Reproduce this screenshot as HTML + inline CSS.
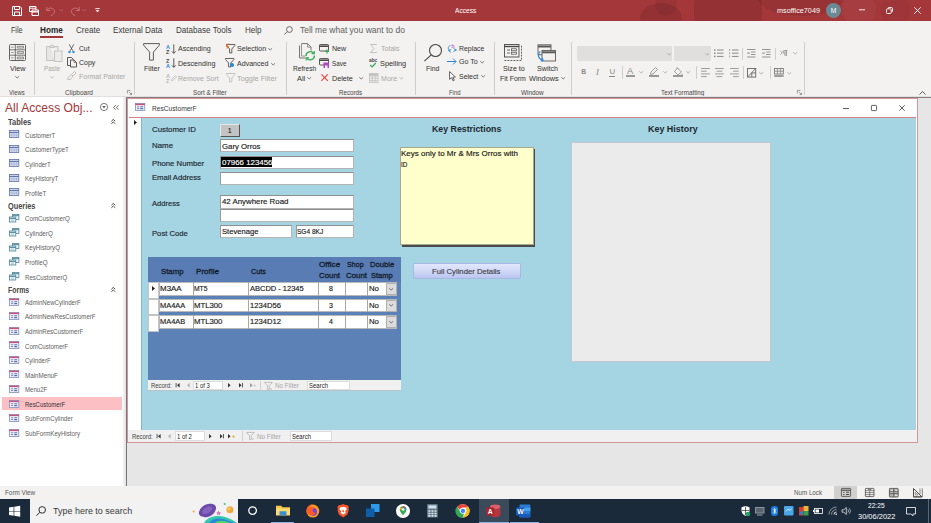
<!DOCTYPE html>
<html lang="en">
<head>
<meta charset="utf-8">
<title>Access - ResCustomerF</title>
<style>
*{box-sizing:border-box;margin:0;padding:0}
html,body{width:931px;height:523px;overflow:hidden;background:#e6e6e6}
body{font-family:"Liberation Sans",sans-serif;font-size:8px;color:#262626;position:relative}
.abs{position:absolute}
.t{position:absolute;white-space:nowrap;line-height:1;transform-origin:0 50%}
svg{position:absolute;overflow:visible}
</style>
</head>
<body>
<div class="abs" style="left:0.00px;top:0.00px;width:931.00px;height:21.00px;background:#a4373a;"></div>
<div class="abs" style="left:0.00px;top:21.00px;width:931.00px;height:76.00px;background:#f3f2f1;"></div>
<div class="abs" style="left:0;top:0;width:931px;height:21px;overflow:hidden">
<div class="abs" style="left:640.00px;top:3.00px;width:42.00px;height:30.00px;background:rgba(0,0,0,.10);border-radius:50%"></div>
<div class="abs" style="left:655.00px;top:-6.00px;width:22.00px;height:22.00px;background:rgba(0,0,0,.05);border-radius:50%"></div>
<div class="abs" style="left:694.00px;top:-10.00px;width:68.00px;height:40.00px;background:rgba(0,0,0,.10);border-radius:14px"></div>
<div class="abs" style="left:758.00px;top:-22.00px;width:86.00px;height:38.00px;background:rgba(0,0,0,.08);border-radius:50%"></div>
<div class="abs" style="left:842.00px;top:-8.00px;width:34.00px;height:34.00px;background:rgba(255,255,255,.03);border-radius:50%"></div>
<div class="abs" style="left:880.00px;top:-5.00px;width:30.00px;height:30.00px;background:rgba(0,0,0,.03);border-radius:50%"></div>
</div>
<svg style="left:12.00px;top:6.00px" width="10" height="10" viewBox="0 0 10 10" fill="none" stroke="#fff" stroke-width="1"><path d="M.5.5h7.500l1.500 1.500v7.500h-9z"/><path d="M2.500.5v3h5v-3M2.500 9.500v-3.500h5v3.500"/></svg>
<svg style="left:29.00px;top:6.00px" width="10" height="10" viewBox="0 0 10 10" fill="none" stroke="#fff" stroke-width="1"><path d="M.5.5h6.500v5h-6.500z"/><path d="M.5 2.200h6.500"/><path d="M3 4h6.500v5.500h-6.500z" fill="#a4373a"/><path d="M3 5.800h6.500" stroke-width="1.400"/></svg>
<svg style="left:46.00px;top:6.00px" width="10" height="10" viewBox="0 0 10 10" fill="none" stroke="#c97578" stroke-width="1"><path d="M.8 1v3.500h3.500"/><path d="M1 4.300c1.500-2.500 5-3 6.800-.8s.2 5-2.800 6"/></svg>
<svg style="left:59.30px;top:9.40px" width="4.4" height="2.2" viewBox="0 0 4.4 2.2" ><path d="M.3.3l1.900 1.700 1.900-1.700" fill="none" stroke="#bf6b6e" stroke-width=".8"/></svg>
<svg style="left:70.00px;top:6.00px" width="10" height="10" viewBox="0 0 10 10" fill="none" stroke="#c97578" stroke-width="1"><path d="M9.200 1v3.500h-3.500"/><path d="M9 4.300c-1.500-2.500-5-3-6.800-.8s-.2 5 2.800 6"/></svg>
<svg style="left:82.30px;top:9.40px" width="4.4" height="2.2" viewBox="0 0 4.4 2.2" ><path d="M.3.3l1.900 1.700 1.900-1.700" fill="none" stroke="#bf6b6e" stroke-width=".8"/></svg>
<svg style="left:95.00px;top:8.00px" width="5" height="5" viewBox="0 0 5 5" ><path d="M.3.600h4.400" fill="none" stroke="#fff" stroke-width=".9"/><path d="M.5 2.200l2 2 2-2z" fill="#fff"/></svg>
<div class="t" style="left:454.50px;top:6.86px;font-size:7.60px;color:#fff;transform:scaleX(0.870);">Access</div>
<div class="t" style="left:777.00px;top:6.96px;font-size:7.60px;color:#fff;transform:scaleX(0.954);">msoffice7049</div>
<div class="abs" style="left:826.00px;top:3.00px;width:15.00px;height:15.00px;background:#6b8a96;border-radius:50%"></div>
<div class="t" style="left:830.80px;top:7.64px;font-size:6.72px;color:#fff;">M</div>
<svg style="left:859.00px;top:9.00px" width="6" height="2" viewBox="0 0 6 2" ><path d="M0 .8h6" stroke="#fff" stroke-width=".9"/></svg>
<svg style="left:886.00px;top:7.00px" width="7" height="7" viewBox="0 0 7 7" fill="none" stroke="#fff" stroke-width=".9"><rect x=".5" y="1.800" width="4.700" height="4.700" rx="1"/><path d="M2 1.500c0-.6.4-1 1-1h2.500c.6 0 1 .4 1 1v2.500c0 .6-.4 1-1 1"/></svg>
<svg style="left:914.00px;top:7.00px" width="7" height="7" viewBox="0 0 7 7" ><path d="M.3.300l6.400 6.400M6.700.300l-6.400 6.400" stroke="#fff" stroke-width=".9"/></svg>
<div class="t" style="left:10.50px;top:26.46px;font-size:8.50px;color:#3b3a39;transform:scaleX(0.840);">File</div>
<div class="t" style="left:39.80px;top:26.46px;font-size:8.50px;color:#252423;transform:scaleX(0.965);font-weight:bold;">Home</div>
<div class="abs" style="left:39.80px;top:36.30px;width:23.20px;height:1.70px;background:#a4373a;"></div>
<div class="t" style="left:75.80px;top:26.46px;font-size:8.50px;color:#3b3a39;transform:scaleX(0.945);">Create</div>
<div class="t" style="left:112.90px;top:26.46px;font-size:8.50px;color:#3b3a39;transform:scaleX(0.957);">External Data</div>
<div class="t" style="left:176.00px;top:26.46px;font-size:8.50px;color:#3b3a39;transform:scaleX(0.949);">Database Tools</div>
<div class="t" style="left:244.80px;top:26.46px;font-size:8.50px;color:#3b3a39;transform:scaleX(0.944);">Help</div>
<svg style="left:284.00px;top:25.50px" width="9" height="9" viewBox="0 0 9 9" fill="none" stroke="#605e5c" stroke-width=".9"><circle cx="5.400" cy="3.500" r="2.900"/><path d="M3.300 5.600l-3 3"/></svg>
<div class="t" style="left:300.00px;top:26.46px;font-size:8.50px;color:#605e5c;">Tell me what you want to do</div>
<div class="abs" style="left:34.00px;top:42.00px;width:1.00px;height:52.50px;background:#d0cecc;"></div>
<div class="abs" style="left:134.00px;top:42.00px;width:1.00px;height:52.50px;background:#d0cecc;"></div>
<div class="abs" style="left:286.20px;top:42.00px;width:1.00px;height:52.50px;background:#d0cecc;"></div>
<div class="abs" style="left:415.00px;top:42.00px;width:1.00px;height:52.50px;background:#d0cecc;"></div>
<div class="abs" style="left:494.00px;top:42.00px;width:1.00px;height:52.50px;background:#d0cecc;"></div>
<div class="abs" style="left:571.40px;top:42.00px;width:1.00px;height:52.50px;background:#d0cecc;"></div>
<div class="abs" style="left:804.20px;top:42.00px;width:1.00px;height:52.50px;background:#d0cecc;"></div>
<div class="t" style="left:8.90px;top:89.61px;font-size:6.80px;color:#484644;transform:scaleX(0.871);">Views</div>
<div class="t" style="left:65.00px;top:89.61px;font-size:6.80px;color:#484644;transform:scaleX(0.962);">Clipboard</div>
<div class="t" style="left:193.00px;top:89.71px;font-size:6.80px;color:#484644;transform:scaleX(0.936);">Sort &amp; Filter</div>
<div class="t" style="left:338.80px;top:89.71px;font-size:6.80px;color:#484644;transform:scaleX(0.916);">Records</div>
<div class="t" style="left:448.50px;top:89.71px;font-size:6.80px;color:#484644;transform:scaleX(0.869);">Find</div>
<div class="t" style="left:521.20px;top:89.71px;font-size:6.80px;color:#484644;transform:scaleX(0.939);">Window</div>
<div class="t" style="left:661.10px;top:89.71px;font-size:6.80px;color:#484644;transform:scaleX(0.924);">Text Formatting</div>
<svg style="left:126.70px;top:89.50px" width="5" height="5" viewBox="0 0 5 5" fill="none" stroke="#7a7876" stroke-width=".7"><path d="M.4 3.500v-3.100h3.100" /><path d="M1.800 1.800l2.800 2.800M4.600 2.600v2h-2"/></svg>
<svg style="left:797.20px;top:89.50px" width="5" height="5" viewBox="0 0 5 5" fill="none" stroke="#7a7876" stroke-width=".7"><path d="M.4 3.500v-3.100h3.100" /><path d="M1.800 1.800l2.800 2.800M4.600 2.600v2h-2"/></svg>
<svg style="left:919.20px;top:91.40px" width="7" height="4" viewBox="0 0 7 4" ><path d="M.5 3.500l3-3 3 3" fill="none" stroke="#484644" stroke-width=".9"/></svg>
<svg style="left:9.00px;top:43.70px" width="17" height="17" viewBox="0 0 17 17" fill="none" stroke="#555351" stroke-width=".9"><rect x=".5" y=".5" width="16" height="16" rx="1"/><path d="M.5 5.800h16M.5 11.200h16M6.300.5v16" stroke-width=".8"/><path d="M8.300 2.300h6.200v1.800h-6.200zM8.300 7.600h6.200v1.800h-6.200zM8.300 13h6.200v1.800h-6.200z" stroke-width=".6" fill="#e3e2e1"/><path d="M2 3.200h2.600M2 8.500h2.600M2 13.900h2.600" stroke-width=".6"/></svg>
<div class="t" style="left:9.80px;top:64.80px;font-size:7.50px;color:#323130;transform:scaleX(0.962);">View</div>
<svg style="left:15.00px;top:75.90px" width="4.4" height="2.2" viewBox="0 0 4.4 2.2" ><path d="M.3.3l1.900 1.700 1.900-1.700" fill="none" stroke="#5c5a58" stroke-width=".8"/></svg>
<svg style="left:45.50px;top:43.70px" width="16.5" height="18" viewBox="0 0 16.5 18" fill="#e6e5e4" stroke="#c2c0be" stroke-width=".9"><path d="M4.500 2.500h-4v14h8"/><path d="M8.500 2.500h3.500v4"/><path d="M4 3.500l1-2.300h2.500l1 2.300z"/><rect x="8.500" y="7" width="7.500" height="10.500" fill="#ecebea"/></svg>
<div class="t" style="left:44.30px;top:64.80px;font-size:7.50px;color:#a9a7a5;transform:scaleX(0.845);">Paste</div>
<svg style="left:50.20px;top:75.90px" width="4.4" height="2.2" viewBox="0 0 4.4 2.2" ><path d="M.3.3l1.900 1.700 1.900-1.700" fill="none" stroke="#b3b1af" stroke-width=".8"/></svg>
<svg style="left:68.40px;top:43.50px" width="7" height="9.5" viewBox="0 0 7 9.5" ><path d="M1.200.3l3.600 6.500M5.800.3l-3.600 6.500" fill="none" stroke="#4a4846" stroke-width=".8"/><circle cx="1.500" cy="8" r="1.300" fill="#3a96dd"/><circle cx="5.500" cy="8" r="1.300" fill="#3a96dd"/></svg>
<div class="t" style="left:78.50px;top:44.70px;font-size:7.50px;color:#323130;transform:scaleX(0.900);">Cut</div>
<svg style="left:66.70px;top:56.50px" width="10" height="10.5" viewBox="0 0 10 10.5" fill="none" stroke="#4a4846" stroke-width=".9"><path d="M.5.5h4l2 2v6h-6z"/><path d="M3.500 3h3.500l2.500 2.500v4.500h-6z" fill="#f3f2f1"/><path d="M7 3v2.500h2.500" stroke-width=".6"/></svg>
<div class="t" style="left:78.50px;top:58.70px;font-size:7.50px;color:#323130;transform:scaleX(0.931);">Copy</div>
<svg style="left:67.40px;top:71.00px" width="9.5" height="9" viewBox="0 0 9.5 9" fill="none" stroke="#b9b7b5" stroke-width=".8"><path d="M7.500.5l1.500 1.500-3 3-1.500-1.500z"/><path d="M4.500 3.500l1.500 1.500-2.500 3.500h-3l.5-2z"/></svg>
<div class="t" style="left:78.50px;top:72.70px;font-size:7.50px;color:#a9a7a5;transform:scaleX(0.935);">Format Painter</div>
<svg style="left:143.00px;top:43.00px" width="17" height="17.5" viewBox="0 0 17 17.5" ><path d="M.6.600h15.800v1.500l-6 7v8h-3.800v-8l-6-7z" fill="none" stroke="#555351" stroke-width=".95"/></svg>
<div class="t" style="left:143.70px;top:65.30px;font-size:7.50px;color:#323130;transform:scaleX(0.948);">Filter</div>
<svg style="left:166.00px;top:43.50px" width="11" height="10" viewBox="0 0 11 10" ><text x="0" y="4.600" font-size="5.500" font-weight="bold" fill="#2b88d8" font-family="Liberation Sans, sans-serif">A</text><text x="0" y="9.800" font-size="5.500" font-weight="bold" fill="#4a4846" font-family="Liberation Sans, sans-serif">Z</text><path d="M7.800.3v9M5.800 7.300l2 2 2-2" fill="none" stroke="#4a4846" stroke-width=".9"/></svg>
<div class="t" style="left:178.10px;top:45.40px;font-size:7.50px;color:#323130;transform:scaleX(0.934);">Ascending</div>
<svg style="left:166.00px;top:58.00px" width="11" height="10" viewBox="0 0 11 10" ><text x="0" y="4.600" font-size="5.500" font-weight="bold" fill="#4a4846" font-family="Liberation Sans, sans-serif">Z</text><text x="0" y="9.800" font-size="5.500" font-weight="bold" fill="#2b88d8" font-family="Liberation Sans, sans-serif">A</text><path d="M7.800.3v9M5.800 7.300l2 2 2-2" fill="none" stroke="#4a4846" stroke-width=".9"/></svg>
<div class="t" style="left:178.10px;top:60.00px;font-size:7.50px;color:#323130;transform:scaleX(0.942);">Descending</div>
<svg style="left:166.00px;top:72.50px" width="11" height="10" viewBox="0 0 11 10" ><text x="0" y="4.600" font-size="5.500" font-weight="bold" fill="#b9b7b5" font-family="Liberation Sans, sans-serif">A</text><text x="0" y="9.800" font-size="5.500" font-weight="bold" fill="#b9b7b5" font-family="Liberation Sans, sans-serif">Z</text><path d="M6 6l3.500-3.500 1.200 1.200-3.500 3.500-1.700.5z" fill="none" stroke="#b9b7b5" stroke-width=".7"/></svg>
<div class="t" style="left:178.10px;top:74.60px;font-size:7.50px;color:#a9a7a5;transform:scaleX(0.930);">Remove Sort</div>
<svg style="left:225.60px;top:43.70px" width="9.4" height="9.4" viewBox="0 0 10 10" ><path d="M.5.5h9v1l-3.300 3.800v4.200h-2.400v-4.200l-3.300-3.800z" fill="none" stroke="#4a4846" stroke-width=".9"/><path d="M1.800-.5l-2 3.500h1.600l-1 3 2.800-4h-1.600l1.400-2.500z" fill="#f7630c"/></svg>
<div class="t" style="left:237.40px;top:45.40px;font-size:7.50px;color:#323130;transform:scaleX(0.946);">Selection</div>
<svg style="left:268.30px;top:47.90px" width="4.4" height="2.2" viewBox="0 0 4.4 2.2" ><path d="M.3.3l1.900 1.700 1.900-1.700" fill="none" stroke="#5c5a58" stroke-width=".8"/></svg>
<svg style="left:225.40px;top:58.20px" width="9.4" height="9.4" viewBox="0 0 10 10" ><path d="M.5.5h9v1l-3.300 3.800v4.200h-2.400v-4.200l-3.300-3.800z" fill="none" stroke="#4a4846" stroke-width=".9"/><circle cx="7.500" cy="7.500" r="2.200" fill="#2b88d8"/></svg>
<div class="t" style="left:237.40px;top:60.00px;font-size:7.50px;color:#323130;transform:scaleX(0.941);">Advanced</div>
<svg style="left:270.80px;top:62.50px" width="4.4" height="2.2" viewBox="0 0 4.4 2.2" ><path d="M.3.3l1.900 1.700 1.900-1.700" fill="none" stroke="#5c5a58" stroke-width=".8"/></svg>
<svg style="left:225.80px;top:73.00px" width="9.4" height="9.4" viewBox="0 0 10 10" ><path d="M.5.5h9v1l-3.300 3.800v4.200h-2.400v-4.200l-3.300-3.800z" fill="none" stroke="#bdbbb9" stroke-width=".9"/></svg>
<div class="t" style="left:237.40px;top:74.60px;font-size:7.50px;color:#a9a7a5;transform:scaleX(0.977);">Toggle Filter</div>
<svg style="left:297.60px;top:43.20px" width="17.5" height="19" viewBox="0 0 17.5 19" fill="none" stroke="#6a6866" stroke-width=".9"><path d="M1.500 2.500v12.500h6"/><path d="M3.500.6h6l3.500 3.500v3.500"/><path d="M3.500.6v12.500h4" stroke="#8a8886"/><path d="M9.500.6v3.500h3.500" stroke-width=".7"/><path d="M8 13a4.300 4.300 0 0 1 7.800-2.500M16.500 12.500a4.300 4.300 0 0 1-7.800 2.500" stroke="#33a852" stroke-width="1.300"/><path d="M16.300 8v2.800h-2.800M8.200 17.500v-2.800h2.800" stroke="#33a852" stroke-width="1.100"/></svg>
<div class="t" style="left:292.80px;top:64.70px;font-size:7.50px;color:#323130;transform:scaleX(0.883);">Refresh</div>
<div class="t" style="left:297.10px;top:74.60px;font-size:7.50px;color:#323130;transform:scaleX(0.984);">All</div>
<svg style="left:307.40px;top:77.10px" width="4.4" height="2.2" viewBox="0 0 4.4 2.2" ><path d="M.3.3l1.900 1.700 1.900-1.700" fill="none" stroke="#5c5a58" stroke-width=".8"/></svg>
<svg style="left:319.40px;top:43.80px" width="10.5" height="9.5" viewBox="0 0 10.5 9.5" fill="none" stroke="#4a4846" stroke-width=".9"><rect x=".5" y=".5" width="9" height="6.500" rx=".8"/><path d="M.5 2.200h9" stroke-width="1.600"/><path d="M8 5.500v4M6 7.500h4" stroke="#33a852" stroke-width="1.200"/></svg>
<div class="t" style="left:331.50px;top:45.40px;font-size:7.50px;color:#323130;transform:scaleX(0.946);">New</div>
<svg style="left:319.40px;top:58.20px" width="10.5" height="10" viewBox="0 0 10.5 10" fill="none" stroke="#4a4846" stroke-width=".9"><rect x=".5" y=".5" width="9" height="6.500" rx=".8"/><path d="M.5 2.200h9" stroke-width="1.600"/><rect x="4.500" y="4.500" width="5.500" height="5.500" fill="#b146c2" stroke="none"/><rect x="6" y="7.500" width="2.500" height="2.500" fill="#f3f2f1" stroke="none"/></svg>
<div class="t" style="left:331.50px;top:60.00px;font-size:7.50px;color:#323130;transform:scaleX(0.848);">Save</div>
<svg style="left:321.00px;top:74.30px" width="7.2" height="7.2" viewBox="0 0 7.2 7.2" ><path d="M.4.400l6.400 6.400M6.800.400l-6.400 6.400" stroke="#e8403a" stroke-width="1.100"/></svg>
<div class="t" style="left:331.50px;top:74.60px;font-size:7.50px;color:#323130;transform:scaleX(0.955);">Delete</div>
<svg style="left:358.60px;top:77.10px" width="4.4" height="2.2" viewBox="0 0 4.4 2.2" ><path d="M.3.3l1.900 1.700 1.900-1.700" fill="none" stroke="#5c5a58" stroke-width=".8"/></svg>
<svg style="left:369.80px;top:44.20px" width="7.5" height="9" viewBox="0 0 7.5 9" ><path d="M7 .5h-6.500l3.500 4-3.500 4h6.500" fill="none" stroke="#bdbbb9" stroke-width=".9"/></svg>
<div class="t" style="left:380.60px;top:45.40px;font-size:7.50px;color:#a9a7a5;transform:scaleX(0.939);">Totals</div>
<svg style="left:369.40px;top:57.50px" width="8" height="10" viewBox="0 0 8 10" ><text x="0" y="4" font-size="4.800" font-weight="bold" fill="#4a4846" font-family="Liberation Sans, sans-serif">abc</text><path d="M1.200 7l2 2 3.600-4" fill="none" stroke="#33a852" stroke-width="1.200"/></svg>
<div class="t" style="left:380.00px;top:60.00px;font-size:7.50px;color:#323130;transform:scaleX(0.982);">Spelling</div>
<svg style="left:368.60px;top:72.80px" width="9.5" height="10" viewBox="0 0 9.5 10" fill="none" stroke="#c2c0be" stroke-width=".8"><rect x=".5" y=".5" width="8.500" height="9"/><path d="M.5 3h8.500M.5 5.300h8.500M.5 7.600h8.500M3.300 3v6.500M6.200 3v6.500"/><path d="M.5 1.700h8.500" stroke-width="2"/></svg>
<div class="t" style="left:380.60px;top:74.60px;font-size:7.50px;color:#a9a7a5;transform:scaleX(0.942);">More</div>
<svg style="left:399.00px;top:77.10px" width="4.4" height="2.2" viewBox="0 0 4.4 2.2" ><path d="M.3.3l1.900 1.700 1.900-1.700" fill="none" stroke="#b3b1af" stroke-width=".8"/></svg>
<svg style="left:423.90px;top:43.70px" width="18.2" height="17.5" viewBox="0 0 18.2 17.5" fill="none" stroke="#4a4846" stroke-width="1.100"><circle cx="11.500" cy="6.500" r="6"/><path d="M7.200 10.800l-6.800 6.400"/></svg>
<div class="t" style="left:426.20px;top:64.70px;font-size:7.50px;color:#323130;transform:scaleX(0.918);">Find</div>
<svg style="left:447.00px;top:43.00px" width="10" height="10" viewBox="0 0 10 10" ><text x="4.500" y="4.500" font-size="5.500" fill="#b146c2" font-family="Liberation Sans, sans-serif">b</text><path d="M3.500 2.500c-3 1-3 4 0 5.500M6.500 8.500l3-1.500-3-1.500" fill="none" stroke="#2b88d8" stroke-width=".9"/><path d="M3.800 9.500l-2.500-2 3-1" fill="none" stroke="#2b88d8" stroke-width=".8"/></svg>
<div class="t" style="left:459.30px;top:44.50px;font-size:7.50px;color:#323130;transform:scaleX(0.919);">Replace</div>
<svg style="left:447.10px;top:58.00px" width="10" height="7" viewBox="0 0 10 7" ><path d="M0 3.500h9M6 .5l3 3-3 3" fill="none" stroke="#2b88d8" stroke-width="1"/></svg>
<div class="t" style="left:459.30px;top:58.20px;font-size:7.50px;color:#323130;transform:scaleX(0.945);">Go To</div>
<svg style="left:480.20px;top:60.70px" width="4.4" height="2.2" viewBox="0 0 4.4 2.2" ><path d="M.3.3l1.900 1.700 1.900-1.700" fill="none" stroke="#5c5a58" stroke-width=".8"/></svg>
<svg style="left:448.50px;top:71.00px" width="7" height="10" viewBox="0 0 7 10" ><path d="M.6.600v7.800l2-1.800 1.500 3.200 1.200-.6-1.500-3 2.600-.2z" fill="#fff" stroke="#3b3a39" stroke-width=".8"/></svg>
<div class="t" style="left:459.30px;top:72.50px;font-size:7.50px;color:#323130;transform:scaleX(0.926);">Select</div>
<svg style="left:480.70px;top:75.00px" width="4.4" height="2.2" viewBox="0 0 4.4 2.2" ><path d="M.3.3l1.900 1.700 1.900-1.700" fill="none" stroke="#5c5a58" stroke-width=".8"/></svg>
<svg style="left:504.30px;top:43.50px" width="18.2" height="17.3" viewBox="0 0 18.2 17.3" fill="none" stroke="#4a4846" stroke-width=".9"><rect x=".5" y=".5" width="14.500" height="12.500"/><path d="M.5 2.500h14.500" stroke-width="1.400"/><path d="M.5 16.500h17v-16" stroke-dasharray="1.800 1.200"/><path d="M3 6h3M3 9h3" stroke-width=".8"/><rect x="7.500" y="4.800" width="5" height="2" stroke-width=".7"/><rect x="7.500" y="8.200" width="5" height="2" stroke-width=".7"/></svg>
<div class="t" style="left:502.60px;top:64.70px;font-size:7.50px;color:#323130;transform:scaleX(0.951);">Size to</div>
<div class="t" style="left:500.40px;top:74.60px;font-size:7.50px;color:#323130;transform:scaleX(0.928);">Fit Form</div>
<svg style="left:537.30px;top:43.50px" width="19" height="17.5" viewBox="0 0 19 17.5" fill="none" stroke="#5c5a58" stroke-width=".9"><rect x="1" y=".8" width="13" height="10" fill="#f3f2f1"/><path d="M1 2.500h13" stroke-width="2"/><rect x="5" y="6.500" width="13.500" height="10.500" fill="#f3f2f1"/><path d="M5 8.300h13.500" stroke-width="2"/><path d="M3.200 7.500c-3 2.500-2.500 7 2.500 9" stroke="#2b88d8" stroke-width="1.100"/><path d="M3.500 17l2.800-.5-1-2.800" stroke="#2b88d8" stroke-width="1"/></svg>
<div class="t" style="left:536.60px;top:64.70px;font-size:7.50px;color:#323130;transform:scaleX(0.951);">Switch</div>
<div class="t" style="left:529.30px;top:74.60px;font-size:7.50px;color:#323130;transform:scaleX(0.976);">Windows</div>
<svg style="left:560.60px;top:77.10px" width="4.4" height="2.2" viewBox="0 0 4.4 2.2" ><path d="M.3.3l1.900 1.700 1.900-1.700" fill="none" stroke="#5c5a58" stroke-width=".8"/></svg>
<div class="abs" style="left:576.50px;top:46.20px;width:95.70px;height:14.50px;background:#e1dfdd;border-radius:1px"></div>
<div class="abs" style="left:673.60px;top:46.20px;width:37.80px;height:14.50px;background:#e1dfdd;border-radius:1px"></div>
<svg style="left:666.60px;top:52.90px" width="4.4" height="2.2" viewBox="0 0 4.4 2.2" ><path d="M.3.3l1.900 1.700 1.900-1.700" fill="none" stroke="#a19f9d" stroke-width=".8"/></svg>
<svg style="left:705.30px;top:52.90px" width="4.4" height="2.2" viewBox="0 0 4.4 2.2" ><path d="M.3.3l1.900 1.700 1.900-1.700" fill="none" stroke="#a19f9d" stroke-width=".8"/></svg>
<svg style="left:714.10px;top:48.70px" width="9.5" height="8.5" viewBox="0 0 9.5 8.5" fill="none" stroke="#8a8886"><path d="M3 1h6.500M3 4.200h6.500M3 7.400h6.500" stroke-width="1"/><rect x="0" y=".3" width="1.500" height="1.500" fill="#8a8886" stroke="none"/><rect x="0" y="3.500" width="1.500" height="1.500" fill="#8a8886" stroke="none"/><rect x="0" y="6.700" width="1.500" height="1.500" fill="#8a8886" stroke="none"/></svg>
<svg style="left:728.70px;top:48.70px" width="9.5" height="8.5" viewBox="0 0 9.5 8.5" fill="none" stroke="#8a8886"><path d="M3 1h6.500M3 4.200h6.500M3 7.400h6.500" stroke-width="1"/><path d="M.6 0v2M.6 3.200v2M.6 6.400v2" stroke-width=".7"/></svg>
<div class="abs" style="left:742.40px;top:47.50px;width:1.00px;height:12.00px;background:#d0cecc;"></div>
<svg style="left:747.30px;top:48.70px" width="8.5" height="8.5" viewBox="0 0 8.5 8.5" fill="none" stroke="#8a8886"><path d="M0 .5h8.500M4 3h4.500M4 5.500h4.500M0 8h8.500" stroke-width=".9"/><path d="M0 4.200h2.500M1.500 3.200l1 1-1 1" stroke-width=".7"/></svg>
<svg style="left:761.90px;top:48.70px" width="8.5" height="8.5" viewBox="0 0 8.5 8.5" fill="none" stroke="#8a8886"><path d="M0 .5h8.500M4 3h4.500M4 5.500h4.500M0 8h8.500" stroke-width=".9"/><path d="M.5 4.200h2.500M1.500 3.200l-1 1 1 1" stroke-width=".7"/></svg>
<div class="abs" style="left:775.10px;top:47.50px;width:1.00px;height:12.00px;background:#d0cecc;"></div>
<svg style="left:780.40px;top:50.00px" width="8" height="6" viewBox="0 0 8 6" fill="none" stroke="#8a8886"><path d="M.3.800l1.800 2-1.800 2" stroke-width=".7"/><path d="M5 .5v5.500M6.500.5v5.500M7.500.5h-3a1.500 1.500 0 0 0 0 3h.5" stroke-width=".8"/></svg>
<svg style="left:792.60px;top:52.40px" width="4.4" height="2.2" viewBox="0 0 4.4 2.2" ><path d="M.3.3l1.900 1.700 1.900-1.700" fill="none" stroke="#a19f9d" stroke-width=".8"/></svg>
<div class="t" style="left:581.20px;top:68.98px;font-size:6.65px;color:#8a8886;font-weight:bold;">B</div>
<div class="t" style="left:596.30px;top:68.56px;font-size:7.60px;color:#8a8886;transform:scaleX(1.150);font-style:italic;font-family:'Liberation Serif',serif;">I</div>
<div class="t" style="left:609.40px;top:68.19px;font-size:7.75px;color:#8a8886;">U</div>
<div class="abs" style="left:609.20px;top:76.00px;width:6.00px;height:0.80px;background:#8a8886;"></div>
<div class="abs" style="left:621.50px;top:66.40px;width:1.00px;height:12.80px;background:#d0cecc;"></div>
<div class="t" style="left:627.30px;top:67.24px;font-size:9.00px;color:#8a8886;transform:scaleX(1.033);">A</div>
<div class="abs" style="left:625.60px;top:75.30px;width:9.60px;height:1.60px;background:#9b9997;"></div>
<svg style="left:638.80px;top:71.40px" width="4.4" height="2.2" viewBox="0 0 4.4 2.2" ><path d="M.3.3l1.900 1.700 1.900-1.700" fill="none" stroke="#a19f9d" stroke-width=".8"/></svg>
<svg style="left:650.00px;top:67.00px" width="8.5" height="8" viewBox="0 0 8.5 8" ><path d="M5.500.5l2 2-4.500 4.500-2.500.5.500-2.500z" fill="none" stroke="#8a8886" stroke-width=".8"/></svg>
<div class="abs" style="left:649.40px;top:75.30px;width:9.60px;height:1.60px;background:#9b9997;"></div>
<svg style="left:662.60px;top:71.40px" width="4.4" height="2.2" viewBox="0 0 4.4 2.2" ><path d="M.3.3l1.900 1.700 1.900-1.700" fill="none" stroke="#a19f9d" stroke-width=".8"/></svg>
<svg style="left:674.00px;top:66.50px" width="8.5" height="8.5" viewBox="0 0 8.5 8.5" ><path d="M3.500 1l4 4-3.500 3-3.500-3.500z M2.500.2l2 2" fill="none" stroke="#8a8886" stroke-width=".8"/><path d="M8 6.500l.7 1.500h-1.400z" fill="#8a8886"/></svg>
<div class="abs" style="left:673.10px;top:75.30px;width:9.60px;height:1.60px;background:#9b9997;"></div>
<svg style="left:686.40px;top:71.40px" width="4.4" height="2.2" viewBox="0 0 4.4 2.2" ><path d="M.3.3l1.900 1.700 1.900-1.700" fill="none" stroke="#a19f9d" stroke-width=".8"/></svg>
<div class="abs" style="left:696.00px;top:66.40px;width:1.00px;height:12.80px;background:#d0cecc;"></div>
<svg style="left:700.60px;top:68.40px" width="8.8" height="10.8" viewBox="0 0 8.8 10.8" fill="none" stroke="#8a8886" stroke-width="0.8"><path d="M0.00 0.50h8.80"/><path d="M0.00 3.20h5.72"/><path d="M0.00 5.90h8.80"/><path d="M0.00 8.60h5.72"/></svg>
<svg style="left:715.10px;top:68.40px" width="8.8" height="10.8" viewBox="0 0 8.8 10.8" fill="none" stroke="#8a8886" stroke-width="0.8"><path d="M0.00 0.50h8.80"/><path d="M1.54 3.20h5.72"/><path d="M0.00 5.90h8.80"/><path d="M1.54 8.60h5.72"/></svg>
<svg style="left:729.60px;top:68.40px" width="8.8" height="10.8" viewBox="0 0 8.8 10.8" fill="none" stroke="#8a8886" stroke-width="0.8"><path d="M0.00 0.50h8.80"/><path d="M3.08 3.20h5.72"/><path d="M0.00 5.90h8.80"/><path d="M3.08 8.60h5.72"/></svg>
<div class="abs" style="left:743.00px;top:66.40px;width:1.00px;height:12.80px;background:#d0cecc;"></div>
<svg style="left:747.30px;top:67.60px" width="9.2" height="9.6" viewBox="0 0 9.2 9.6" fill="none" stroke="#6a6866" stroke-width=".9"><rect x=".5" y=".5" width="8.200" height="8.600"/><path d="M.5 9.100l8.200-8.600M4.800 9.100v-4.200h3.900" /></svg>
<svg style="left:759.30px;top:71.70px" width="4.4" height="2.2" viewBox="0 0 4.4 2.2" ><path d="M.3.3l1.900 1.700 1.900-1.700" fill="none" stroke="#a19f9d" stroke-width=".8"/></svg>
<div class="abs" style="left:769.60px;top:66.40px;width:1.00px;height:12.80px;background:#d0cecc;"></div>
<svg style="left:773.90px;top:67.70px" width="9.8" height="9" viewBox="0 0 9.8 9" fill="none" stroke="#7a7876" stroke-width=".9"><rect x=".5" y=".5" width="8.800" height="5.500"/><path d="M.5 3.200h8.800M3.400.5v5.500M6.400.5v5.500" stroke-width=".7"/><path d="M.2 8h9.400" stroke-width="1.400"/></svg>
<svg style="left:787.10px;top:71.70px" width="4.4" height="2.2" viewBox="0 0 4.4 2.2" ><path d="M.3.3l1.900 1.700 1.900-1.700" fill="none" stroke="#a19f9d" stroke-width=".8"/></svg>
<div class="abs" style="left:0.00px;top:96.00px;width:931.00px;height:1.00px;background:#e1dfdd;"></div>
<div class="abs" style="left:0.00px;top:97.00px;width:931.00px;height:389.00px;background:#e6e6e6;"></div>
<div class="abs" style="left:0.00px;top:97.00px;width:123.40px;height:389.00px;background:#fff;"></div>
<div class="abs" style="left:123.40px;top:97.00px;width:2.40px;height:389.00px;background:linear-gradient(90deg,#f4f5f6,#dfe2e5);"></div>
<div class="abs" style="left:125.70px;top:97.00px;width:1.20px;height:389.00px;background:#7d7575;"></div>
<div class="abs" style="left:125.70px;top:97.30px;width:805.30px;height:1.20px;background:#888080;"></div>
<div class="t" style="left:5.00px;top:101.18px;font-size:13.00px;color:#a4373a;transform:scaleX(0.932);">All Access Obj...</div>
<svg style="left:99.50px;top:102.80px" width="8" height="8" viewBox="0 0 8 8" ><circle cx="4" cy="4" r="3.600" fill="none" stroke="#444" stroke-width=".7"/><path d="M2.300 3.200h3.400l-1.700 2z" fill="#333"/></svg>
<svg style="left:113.00px;top:104.70px" width="6" height="5" viewBox="0 0 6 5" ><path d="M2.800.3l-2.300 2.200 2.300 2.200M5.600.3l-2.300 2.200 2.300 2.200" fill="none" stroke="#444" stroke-width=".8"/></svg>
<div class="t" style="left:7.80px;top:118.15px;font-size:8.30px;color:#484848;transform:scaleX(0.907);font-weight:bold;">Tables</div>
<svg style="left:111.30px;top:119.20px" width="4.6" height="5.2" viewBox="0 0 4.6 5.2" ><path d="M.4 2.200l1.900-1.800 1.900 1.800M.4 4.800l1.900-1.800 1.900 1.800" fill="none" stroke="#333" stroke-width=".9"/></svg>
<svg style="left:8.70px;top:130.30px" width="10.2" height="7.8" viewBox="0 0 10.2 7.8" ><rect x=".4" y=".4" width="9.400" height="7" fill="#e6ebf7" stroke="#5b6fa8" stroke-width=".8"/><path d="M.4 2.400h9.400" stroke="#5b6fa8" stroke-width="1.200"/><path d="M.4 4.200h9.400M.4 5.800h9.400M2.800 1.800v5.600M5.100 1.800v5.600M7.400 1.800v5.600" stroke="#8d9cc6" stroke-width=".5"/></svg>
<div class="t" style="left:25.30px;top:132.66px;font-size:6.90px;color:#5e5e5e;transform:scaleX(0.888);">CustomerT</div>
<svg style="left:8.70px;top:144.90px" width="10.2" height="7.8" viewBox="0 0 10.2 7.8" ><rect x=".4" y=".4" width="9.400" height="7" fill="#e6ebf7" stroke="#5b6fa8" stroke-width=".8"/><path d="M.4 2.400h9.400" stroke="#5b6fa8" stroke-width="1.200"/><path d="M.4 4.200h9.400M.4 5.800h9.400M2.800 1.800v5.600M5.100 1.800v5.600M7.400 1.800v5.600" stroke="#8d9cc6" stroke-width=".5"/></svg>
<div class="t" style="left:25.30px;top:147.26px;font-size:6.90px;color:#5e5e5e;transform:scaleX(0.894);">CustomerTypeT</div>
<svg style="left:8.70px;top:159.30px" width="10.2" height="7.8" viewBox="0 0 10.2 7.8" ><rect x=".4" y=".4" width="9.400" height="7" fill="#e6ebf7" stroke="#5b6fa8" stroke-width=".8"/><path d="M.4 2.400h9.400" stroke="#5b6fa8" stroke-width="1.200"/><path d="M.4 4.200h9.400M.4 5.800h9.400M2.800 1.800v5.600M5.100 1.800v5.600M7.400 1.800v5.600" stroke="#8d9cc6" stroke-width=".5"/></svg>
<div class="t" style="left:25.30px;top:161.66px;font-size:6.90px;color:#5e5e5e;transform:scaleX(0.874);">CylinderT</div>
<svg style="left:8.70px;top:173.80px" width="10.2" height="7.8" viewBox="0 0 10.2 7.8" ><rect x=".4" y=".4" width="9.400" height="7" fill="#e6ebf7" stroke="#5b6fa8" stroke-width=".8"/><path d="M.4 2.400h9.400" stroke="#5b6fa8" stroke-width="1.200"/><path d="M.4 4.200h9.400M.4 5.800h9.400M2.800 1.800v5.600M5.100 1.800v5.600M7.400 1.800v5.600" stroke="#8d9cc6" stroke-width=".5"/></svg>
<div class="t" style="left:25.30px;top:176.16px;font-size:6.90px;color:#5e5e5e;transform:scaleX(0.884);">KeyHistoryT</div>
<svg style="left:8.70px;top:188.30px" width="10.2" height="7.8" viewBox="0 0 10.2 7.8" ><rect x=".4" y=".4" width="9.400" height="7" fill="#e6ebf7" stroke="#5b6fa8" stroke-width=".8"/><path d="M.4 2.400h9.400" stroke="#5b6fa8" stroke-width="1.200"/><path d="M.4 4.200h9.400M.4 5.800h9.400M2.800 1.800v5.600M5.100 1.800v5.600M7.400 1.800v5.600" stroke="#8d9cc6" stroke-width=".5"/></svg>
<div class="t" style="left:25.30px;top:190.66px;font-size:6.90px;color:#5e5e5e;transform:scaleX(0.892);">ProfileT</div>
<div class="t" style="left:7.80px;top:202.05px;font-size:8.30px;color:#484848;transform:scaleX(0.886);font-weight:bold;">Queries</div>
<svg style="left:111.30px;top:203.10px" width="4.6" height="5.2" viewBox="0 0 4.6 5.2" ><path d="M.4 2.200l1.900-1.800 1.900 1.800M.4 4.800l1.900-1.800 1.900 1.800" fill="none" stroke="#333" stroke-width=".9"/></svg>
<svg style="left:8.70px;top:213.70px" width="10.4" height="8.6" viewBox="0 0 10.4 8.6" ><rect x="3.500" y=".4" width="6.400" height="5" fill="#eef6f9" stroke="#4b8496" stroke-width=".8"/><path d="M3.500 1.700h6.400" stroke="#4b8496" stroke-width="1"/><rect x=".4" y="3" width="6.400" height="5" fill="#eef6f9" stroke="#4b8496" stroke-width=".8"/><path d="M.4 4.400h6.400" stroke="#4b8496" stroke-width="1"/><path d="M2 6h3M2 7h3" stroke="#8ab" stroke-width=".5"/></svg>
<div class="t" style="left:25.30px;top:216.46px;font-size:6.90px;color:#5e5e5e;transform:scaleX(0.901);">ComCustomerQ</div>
<svg style="left:8.70px;top:228.20px" width="10.4" height="8.6" viewBox="0 0 10.4 8.6" ><rect x="3.500" y=".4" width="6.400" height="5" fill="#eef6f9" stroke="#4b8496" stroke-width=".8"/><path d="M3.500 1.700h6.400" stroke="#4b8496" stroke-width="1"/><rect x=".4" y="3" width="6.400" height="5" fill="#eef6f9" stroke="#4b8496" stroke-width=".8"/><path d="M.4 4.400h6.400" stroke="#4b8496" stroke-width="1"/><path d="M2 6h3M2 7h3" stroke="#8ab" stroke-width=".5"/></svg>
<div class="t" style="left:25.30px;top:230.96px;font-size:6.90px;color:#5e5e5e;transform:scaleX(0.906);">CylinderQ</div>
<svg style="left:8.70px;top:242.70px" width="10.4" height="8.6" viewBox="0 0 10.4 8.6" ><rect x="3.500" y=".4" width="6.400" height="5" fill="#eef6f9" stroke="#4b8496" stroke-width=".8"/><path d="M3.500 1.700h6.400" stroke="#4b8496" stroke-width="1"/><rect x=".4" y="3" width="6.400" height="5" fill="#eef6f9" stroke="#4b8496" stroke-width=".8"/><path d="M.4 4.400h6.400" stroke="#4b8496" stroke-width="1"/><path d="M2 6h3M2 7h3" stroke="#8ab" stroke-width=".5"/></svg>
<div class="t" style="left:25.30px;top:245.46px;font-size:6.90px;color:#5e5e5e;transform:scaleX(0.906);">KeyHistoryQ</div>
<svg style="left:8.70px;top:257.30px" width="10.4" height="8.6" viewBox="0 0 10.4 8.6" ><rect x="3.500" y=".4" width="6.400" height="5" fill="#eef6f9" stroke="#4b8496" stroke-width=".8"/><path d="M3.500 1.700h6.400" stroke="#4b8496" stroke-width="1"/><rect x=".4" y="3" width="6.400" height="5" fill="#eef6f9" stroke="#4b8496" stroke-width=".8"/><path d="M.4 4.400h6.400" stroke="#4b8496" stroke-width="1"/><path d="M2 6h3M2 7h3" stroke="#8ab" stroke-width=".5"/></svg>
<div class="t" style="left:25.30px;top:260.06px;font-size:6.90px;color:#5e5e5e;transform:scaleX(0.911);">ProfileQ</div>
<svg style="left:8.70px;top:271.80px" width="10.4" height="8.6" viewBox="0 0 10.4 8.6" ><rect x="3.500" y=".4" width="6.400" height="5" fill="#eef6f9" stroke="#4b8496" stroke-width=".8"/><path d="M3.500 1.700h6.400" stroke="#4b8496" stroke-width="1"/><rect x=".4" y="3" width="6.400" height="5" fill="#eef6f9" stroke="#4b8496" stroke-width=".8"/><path d="M.4 4.400h6.400" stroke="#4b8496" stroke-width="1"/><path d="M2 6h3M2 7h3" stroke="#8ab" stroke-width=".5"/></svg>
<div class="t" style="left:25.30px;top:274.56px;font-size:6.90px;color:#5e5e5e;transform:scaleX(0.890);">ResCustomerQ</div>
<div class="t" style="left:7.80px;top:286.05px;font-size:8.30px;color:#484848;transform:scaleX(0.836);font-weight:bold;">Forms</div>
<svg style="left:111.30px;top:287.10px" width="4.6" height="5.2" viewBox="0 0 4.6 5.2" ><path d="M.4 2.200l1.900-1.800 1.900 1.800M.4 4.800l1.900-1.800 1.900 1.800" fill="none" stroke="#333" stroke-width=".9"/></svg>
<div class="abs" style="left:2.30px;top:397.10px;width:120.00px;height:13.30px;background:#fcbfc3;"></div>
<svg style="left:8.70px;top:297.70px" width="10.2" height="8.5" viewBox="0 0 10.2 8.5" ><rect x=".4" y=".4" width="9.400" height="7.200" fill="#f1f3fa" stroke="#7f8cc0" stroke-width=".8"/><path d="M.4 1.400h9.400" stroke="#c8507a" stroke-width="1.400"/><path d="M2 3.800h2.200M2 5.600h2.200" stroke="#5b6fa8" stroke-width=".8"/><path d="M5.200 3.800h3M5.200 5.600h3" stroke="#5b6fa8" stroke-width="1.100"/></svg>
<div class="t" style="left:25.30px;top:299.96px;font-size:6.90px;color:#5e5e5e;transform:scaleX(0.887);">AdminNewCylinderF</div>
<svg style="left:8.70px;top:312.20px" width="10.2" height="8.5" viewBox="0 0 10.2 8.5" ><rect x=".4" y=".4" width="9.400" height="7.200" fill="#f1f3fa" stroke="#7f8cc0" stroke-width=".8"/><path d="M.4 1.400h9.400" stroke="#c8507a" stroke-width="1.400"/><path d="M2 3.800h2.200M2 5.600h2.200" stroke="#5b6fa8" stroke-width=".8"/><path d="M5.200 3.800h3M5.200 5.600h3" stroke="#5b6fa8" stroke-width="1.100"/></svg>
<div class="t" style="left:25.30px;top:314.46px;font-size:6.90px;color:#5e5e5e;transform:scaleX(0.886);">AdminNewResCustomerF</div>
<svg style="left:8.70px;top:326.80px" width="10.2" height="8.5" viewBox="0 0 10.2 8.5" ><rect x=".4" y=".4" width="9.400" height="7.200" fill="#f1f3fa" stroke="#7f8cc0" stroke-width=".8"/><path d="M.4 1.400h9.400" stroke="#c8507a" stroke-width="1.400"/><path d="M2 3.800h2.200M2 5.600h2.200" stroke="#5b6fa8" stroke-width=".8"/><path d="M5.200 3.800h3M5.200 5.600h3" stroke="#5b6fa8" stroke-width="1.100"/></svg>
<div class="t" style="left:25.30px;top:329.06px;font-size:6.90px;color:#5e5e5e;transform:scaleX(0.884);">AdminResCustomerF</div>
<svg style="left:8.70px;top:341.30px" width="10.2" height="8.5" viewBox="0 0 10.2 8.5" ><rect x=".4" y=".4" width="9.400" height="7.200" fill="#f1f3fa" stroke="#7f8cc0" stroke-width=".8"/><path d="M.4 1.400h9.400" stroke="#c8507a" stroke-width="1.400"/><path d="M2 3.800h2.200M2 5.600h2.200" stroke="#5b6fa8" stroke-width=".8"/><path d="M5.200 3.800h3M5.200 5.600h3" stroke="#5b6fa8" stroke-width="1.100"/></svg>
<div class="t" style="left:25.30px;top:343.56px;font-size:6.90px;color:#5e5e5e;transform:scaleX(0.885);">ComCustomerF</div>
<svg style="left:8.70px;top:355.90px" width="10.2" height="8.5" viewBox="0 0 10.2 8.5" ><rect x=".4" y=".4" width="9.400" height="7.200" fill="#f1f3fa" stroke="#7f8cc0" stroke-width=".8"/><path d="M.4 1.400h9.400" stroke="#c8507a" stroke-width="1.400"/><path d="M2 3.800h2.200M2 5.600h2.200" stroke="#5b6fa8" stroke-width=".8"/><path d="M5.200 3.800h3M5.200 5.600h3" stroke="#5b6fa8" stroke-width="1.100"/></svg>
<div class="t" style="left:25.30px;top:358.16px;font-size:6.90px;color:#5e5e5e;transform:scaleX(0.867);">CylinderF</div>
<svg style="left:8.70px;top:370.40px" width="10.2" height="8.5" viewBox="0 0 10.2 8.5" ><rect x=".4" y=".4" width="9.400" height="7.200" fill="#f1f3fa" stroke="#7f8cc0" stroke-width=".8"/><path d="M.4 1.400h9.400" stroke="#c8507a" stroke-width="1.400"/><path d="M2 3.800h2.200M2 5.600h2.200" stroke="#5b6fa8" stroke-width=".8"/><path d="M5.200 3.800h3M5.200 5.600h3" stroke="#5b6fa8" stroke-width="1.100"/></svg>
<div class="t" style="left:25.30px;top:372.66px;font-size:6.90px;color:#5e5e5e;transform:scaleX(0.903);">MainMenuF</div>
<svg style="left:8.70px;top:385.00px" width="10.2" height="8.5" viewBox="0 0 10.2 8.5" ><rect x=".4" y=".4" width="9.400" height="7.200" fill="#f1f3fa" stroke="#7f8cc0" stroke-width=".8"/><path d="M.4 1.400h9.400" stroke="#c8507a" stroke-width="1.400"/><path d="M2 3.800h2.200M2 5.600h2.200" stroke="#5b6fa8" stroke-width=".8"/><path d="M5.200 3.800h3M5.200 5.600h3" stroke="#5b6fa8" stroke-width="1.100"/></svg>
<div class="t" style="left:25.30px;top:387.26px;font-size:6.90px;color:#5e5e5e;transform:scaleX(0.881);">Menu2F</div>
<svg style="left:8.70px;top:399.50px" width="10.2" height="8.5" viewBox="0 0 10.2 8.5" ><rect x=".4" y=".4" width="9.400" height="7.200" fill="#f1f3fa" stroke="#7f8cc0" stroke-width=".8"/><path d="M.4 1.400h9.400" stroke="#c8507a" stroke-width="1.400"/><path d="M2 3.800h2.200M2 5.600h2.200" stroke="#5b6fa8" stroke-width=".8"/><path d="M5.200 3.800h3M5.200 5.600h3" stroke="#5b6fa8" stroke-width="1.100"/></svg>
<div class="t" style="left:25.30px;top:401.76px;font-size:6.90px;color:#333;transform:scaleX(0.867);">ResCustomerF</div>
<svg style="left:8.70px;top:414.00px" width="10.2" height="8.5" viewBox="0 0 10.2 8.5" ><rect x=".4" y=".4" width="9.400" height="7.200" fill="#f1f3fa" stroke="#7f8cc0" stroke-width=".8"/><path d="M.4 1.400h9.400" stroke="#c8507a" stroke-width="1.400"/><path d="M2 3.800h2.200M2 5.600h2.200" stroke="#5b6fa8" stroke-width=".8"/><path d="M5.200 3.800h3M5.200 5.600h3" stroke="#5b6fa8" stroke-width="1.100"/></svg>
<div class="t" style="left:25.30px;top:416.26px;font-size:6.90px;color:#5e5e5e;transform:scaleX(0.890);">SubFormCylinder</div>
<svg style="left:8.70px;top:428.60px" width="10.2" height="8.5" viewBox="0 0 10.2 8.5" ><rect x=".4" y=".4" width="9.400" height="7.200" fill="#f1f3fa" stroke="#7f8cc0" stroke-width=".8"/><path d="M.4 1.400h9.400" stroke="#c8507a" stroke-width="1.400"/><path d="M2 3.800h2.200M2 5.600h2.200" stroke="#5b6fa8" stroke-width=".8"/><path d="M5.200 3.800h3M5.200 5.600h3" stroke="#5b6fa8" stroke-width="1.100"/></svg>
<div class="t" style="left:25.30px;top:430.86px;font-size:6.90px;color:#5e5e5e;transform:scaleX(0.893);">SubFormKeyHistory</div>
<div class="abs" style="left:127.00px;top:98.40px;width:791.20px;height:344.60px;background:#d3959a;"></div>
<div class="abs" style="left:128.20px;top:99.20px;width:788.80px;height:342.90px;background:#fff;"></div>
<div class="abs" style="left:129.00px;top:116.90px;width:787.00px;height:0.90px;background:#d9808a;"></div>
<div class="abs" style="left:140.50px;top:117.80px;width:775.40px;height:312.50px;background:#a5d4e2;"></div>
<div class="abs" style="left:140.50px;top:117.80px;width:0.70px;height:312.50px;background:#86b4c2;"></div>
<svg style="left:135.20px;top:103.20px" width="10.2" height="8.5" viewBox="0 0 10.2 8.5" ><rect x=".4" y=".4" width="9.400" height="7.200" fill="#f1f3fa" stroke="#7f8cc0" stroke-width=".8"/><path d="M.4 1.400h9.400" stroke="#c8507a" stroke-width="1.400"/><path d="M2 3.800h2.200M2 5.600h2.200" stroke="#5b6fa8" stroke-width=".8"/><path d="M5.200 3.800h3M5.200 5.600h3" stroke="#5b6fa8" stroke-width="1.100"/></svg>
<div class="t" style="left:151.60px;top:105.22px;font-size:7.00px;color:#3b3a39;transform:scaleX(0.948);">ResCustomerF</div>
<svg style="left:842.80px;top:107.60px" width="6" height="1" viewBox="0 0 6 1" ><path d="M0 .5h6" stroke="#333" stroke-width=".8"/></svg>
<svg style="left:871.00px;top:105.00px" width="6" height="6" viewBox="0 0 6 6" ><rect x=".4" y=".4" width="5.200" height="5.200" rx=".8" fill="none" stroke="#333" stroke-width=".8"/></svg>
<svg style="left:898.80px;top:105.00px" width="6" height="6" viewBox="0 0 6 6" ><path d="M.3.300l5.400 5.400M5.700.300l-5.400 5.400" stroke="#333" stroke-width=".8"/></svg>
<svg style="left:133.80px;top:119.80px" width="3" height="5" viewBox="0 0 3 5" ><path d="M0 0l3 2.500-3 2.500z" fill="#222"/></svg>
<div class="t" style="left:152.30px;top:126.04px;font-size:8.10px;color:#1c2730;transform:scaleX(0.966);-webkit-text-stroke:.16px currentColor;">Customer ID</div>
<div class="abs" style="left:220.00px;top:123.60px;width:19.80px;height:13.00px;background:#c3c3c3;border-right:1.200px solid #555;border-bottom:1.200px solid #555;border-top:.8px solid #e8e8e8;border-left:.8px solid #e8e8e8"></div>
<div class="t" style="left:228.30px;top:126.72px;font-size:7.90px;color:#1a1a1a;transform:scaleX(0.800);-webkit-text-stroke:.16px currentColor;">1</div>
<div class="t" style="left:152.30px;top:142.34px;font-size:8.10px;color:#1c2730;transform:scaleX(0.977);-webkit-text-stroke:.16px currentColor;">Name</div>
<div class="abs" style="left:219.70px;top:139.40px;width:134.40px;height:12.90px;background:#fff;border:1px solid #b4b4b4;border-top-color:#8f8f8f;border-left-color:#9a9a9a"></div>
<div class="t" style="left:221.50px;top:142.78px;font-size:8.00px;color:#1a1a1a;transform:scaleX(0.973);-webkit-text-stroke:.16px currentColor;">Gary Orros</div>
<div class="t" style="left:152.30px;top:160.34px;font-size:8.10px;color:#1c2730;transform:scaleX(0.958);-webkit-text-stroke:.16px currentColor;">Phone Number</div>
<div class="abs" style="left:219.70px;top:155.90px;width:134.40px;height:13.40px;background:#fff;border:1px solid #b4b4b4;border-top-color:#8f8f8f;border-left-color:#9a9a9a"></div>
<div class="abs" style="left:221.00px;top:156.60px;width:51.20px;height:10.80px;background:#000;"></div>
<div class="t" style="left:221.50px;top:158.88px;font-size:8.00px;color:#fff;transform:scaleX(0.987);-webkit-text-stroke:.16px currentColor;">07966 123456</div>
<div class="t" style="left:152.30px;top:174.04px;font-size:8.10px;color:#1c2730;transform:scaleX(0.946);-webkit-text-stroke:.16px currentColor;">Email Address</div>
<div class="abs" style="left:219.70px;top:171.80px;width:134.40px;height:13.40px;background:#fff;border:1px solid #b4b4b4;border-top-color:#8f8f8f;border-left-color:#9a9a9a"></div>
<div class="t" style="left:152.30px;top:199.74px;font-size:8.10px;color:#1c2730;transform:scaleX(0.932);-webkit-text-stroke:.16px currentColor;">Address</div>
<div class="abs" style="left:219.70px;top:195.10px;width:134.40px;height:13.60px;background:#fff;border:1px solid #b4b4b4;border-top-color:#8f8f8f;border-left-color:#9a9a9a"></div>
<div class="t" style="left:221.50px;top:198.38px;font-size:8.00px;color:#1a1a1a;transform:scaleX(0.982);-webkit-text-stroke:.16px currentColor;">42 Anywhere Road</div>
<div class="abs" style="left:219.70px;top:208.70px;width:134.40px;height:13.50px;background:#fff;border:1px solid #b4b4b4;border-top-color:#8f8f8f;border-left-color:#9a9a9a"></div>
<div class="t" style="left:152.30px;top:229.94px;font-size:8.10px;color:#1c2730;transform:scaleX(0.947);-webkit-text-stroke:.16px currentColor;">Post Code</div>
<div class="abs" style="left:219.70px;top:224.90px;width:72.20px;height:13.50px;background:#fff;border:1px solid #b4b4b4;border-top-color:#8f8f8f;border-left-color:#9a9a9a"></div>
<div class="t" style="left:221.50px;top:228.22px;font-size:7.90px;color:#1a1a1a;transform:scaleX(0.966);-webkit-text-stroke:.16px currentColor;">Stevenage</div>
<div class="abs" style="left:295.50px;top:224.90px;width:58.60px;height:13.50px;background:#fff;border:1px solid #b4b4b4;border-top-color:#8f8f8f;border-left-color:#9a9a9a"></div>
<div class="t" style="left:297.30px;top:228.22px;font-size:7.90px;color:#1a1a1a;transform:scaleX(0.829);-webkit-text-stroke:.16px currentColor;">SG4 8KJ</div>
<div class="t" style="left:432.10px;top:123.89px;font-size:9.80px;color:#1c2730;transform:scaleX(0.897);font-weight:bold;">Key Restrictions</div>
<div class="abs" style="left:401.60px;top:148.60px;width:133.70px;height:98.00px;background:#4a4a4a;"></div>
<div class="abs" style="left:400.10px;top:147.20px;width:133.60px;height:97.80px;background:#ffffcc;border:.8px solid #a8a890"></div>
<div class="t" style="left:401.00px;top:150.12px;font-size:7.90px;color:#1a1a1a;transform:scaleX(1.015);-webkit-text-stroke:.16px currentColor;">Keys only to Mr &amp; Mrs Orros with</div>
<div class="t" style="left:401.00px;top:160.82px;font-size:7.90px;color:#1a1a1a;transform:scaleX(0.800);-webkit-text-stroke:.16px currentColor;">ID</div>
<div class="t" style="left:647.90px;top:123.89px;font-size:9.80px;color:#1c2730;transform:scaleX(0.911);font-weight:bold;">Key History</div>
<div class="abs" style="left:570.70px;top:142.20px;width:200.00px;height:219.80px;background:#ebebeb;border:1px solid #c4c8ca"></div>
<div class="abs" style="left:412.60px;top:263.10px;width:108.20px;height:15.50px;background:linear-gradient(#e2e7fb,#d3daf7 45%,#bac6f0);border:.8px solid #a7b7e6;border-radius:1.500px"></div>
<div class="t" style="left:432.20px;top:267.62px;font-size:7.90px;color:#404048;transform:scaleX(0.975);-webkit-text-stroke:.16px currentColor;">Full Cylinder Details</div>
<div class="abs" style="left:147.60px;top:256.80px;width:253.90px;height:123.20px;background:#5c81b6;"></div>
<div class="abs" style="left:147.60px;top:256.80px;width:253.90px;height:25.20px;background:#587cb3;"></div>
<div class="t" style="left:161.10px;top:267.88px;font-size:8.00px;color:#141c2c;transform:scaleX(0.973);-webkit-text-stroke:.3px currentColor;">Stamp</div>
<div class="t" style="left:195.80px;top:267.88px;font-size:8.00px;color:#141c2c;transform:scaleX(1.014);-webkit-text-stroke:.3px currentColor;">Profile</div>
<div class="t" style="left:250.80px;top:267.88px;font-size:8.00px;color:#141c2c;transform:scaleX(0.906);-webkit-text-stroke:.3px currentColor;">Cuts</div>
<div class="t" style="left:319.00px;top:261.08px;font-size:8.00px;color:#141c2c;transform:scaleX(1.022);-webkit-text-stroke:.3px currentColor;">Office</div>
<div class="t" style="left:319.20px;top:271.98px;font-size:8.00px;color:#141c2c;transform:scaleX(0.984);-webkit-text-stroke:.3px currentColor;">Count</div>
<div class="t" style="left:347.40px;top:261.08px;font-size:8.00px;color:#141c2c;transform:scaleX(0.888);-webkit-text-stroke:.3px currentColor;">Shop</div>
<div class="t" style="left:346.00px;top:271.98px;font-size:8.00px;color:#141c2c;transform:scaleX(0.984);-webkit-text-stroke:.3px currentColor;">Count</div>
<div class="t" style="left:369.50px;top:261.08px;font-size:8.00px;color:#141c2c;transform:scaleX(0.959);-webkit-text-stroke:.3px currentColor;">Double</div>
<div class="t" style="left:371.30px;top:271.98px;font-size:8.00px;color:#141c2c;transform:scaleX(0.939);-webkit-text-stroke:.3px currentColor;">Stamp</div>
<div class="abs" style="left:147.60px;top:282.40px;width:11.20px;height:16.20px;background:#fff;border:.6px solid #c4c4c4"></div>
<div class="abs" style="left:158.80px;top:282.40px;width:238.20px;height:13.50px;background:#fff;border:.6px solid #b8b8b8"></div>
<div class="abs" style="left:193.10px;top:282.40px;width:0.70px;height:13.50px;background:#a8a8a8;"></div>
<div class="abs" style="left:248.10px;top:282.40px;width:0.70px;height:13.50px;background:#a8a8a8;"></div>
<div class="abs" style="left:317.60px;top:282.40px;width:0.70px;height:13.50px;background:#a8a8a8;"></div>
<div class="abs" style="left:344.70px;top:282.40px;width:0.70px;height:13.50px;background:#a8a8a8;"></div>
<div class="abs" style="left:367.20px;top:282.40px;width:0.70px;height:13.50px;background:#a8a8a8;"></div>
<div class="t" style="left:159.70px;top:285.22px;font-size:7.90px;color:#1a1a1a;transform:scaleX(1.009);-webkit-text-stroke:.16px currentColor;">M3AA</div>
<div class="t" style="left:194.00px;top:285.22px;font-size:7.90px;color:#1a1a1a;transform:scaleX(0.854);-webkit-text-stroke:.16px currentColor;">MT5</div>
<div class="t" style="left:249.50px;top:285.22px;font-size:7.90px;color:#1a1a1a;transform:scaleX(0.948);-webkit-text-stroke:.16px currentColor;">ABCDD - 12345</div>
<div class="t" style="left:328.90px;top:285.22px;font-size:7.90px;color:#1a1a1a;transform:scaleX(0.888);-webkit-text-stroke:.16px currentColor;">8</div>
<div class="t" style="left:368.60px;top:285.22px;font-size:7.90px;color:#1a1a1a;transform:scaleX(0.980);-webkit-text-stroke:.16px currentColor;">No</div>
<div class="abs" style="left:386.20px;top:283.00px;width:10.40px;height:12.30px;background:#dcdcdc;border:.6px solid #b0b0b0"></div>
<svg style="left:389.20px;top:287.90px" width="4.4" height="2.2" viewBox="0 0 4.4 2.2" ><path d="M.3.3l1.900 1.700 1.900-1.700" fill="none" stroke="#555" stroke-width=".8"/></svg>
<div class="abs" style="left:147.60px;top:298.90px;width:11.20px;height:16.20px;background:#fff;border:.6px solid #c4c4c4"></div>
<div class="abs" style="left:158.80px;top:298.90px;width:238.20px;height:13.50px;background:#fff;border:.6px solid #b8b8b8"></div>
<div class="abs" style="left:193.10px;top:298.90px;width:0.70px;height:13.50px;background:#a8a8a8;"></div>
<div class="abs" style="left:248.10px;top:298.90px;width:0.70px;height:13.50px;background:#a8a8a8;"></div>
<div class="abs" style="left:317.60px;top:298.90px;width:0.70px;height:13.50px;background:#a8a8a8;"></div>
<div class="abs" style="left:344.70px;top:298.90px;width:0.70px;height:13.50px;background:#a8a8a8;"></div>
<div class="abs" style="left:367.20px;top:298.90px;width:0.70px;height:13.50px;background:#a8a8a8;"></div>
<div class="t" style="left:159.70px;top:301.72px;font-size:7.90px;color:#1a1a1a;transform:scaleX(0.945);-webkit-text-stroke:.16px currentColor;">MA4AA</div>
<div class="t" style="left:194.00px;top:301.72px;font-size:7.90px;color:#1a1a1a;transform:scaleX(0.980);-webkit-text-stroke:.16px currentColor;">MTL300</div>
<div class="t" style="left:249.50px;top:301.72px;font-size:7.90px;color:#1a1a1a;transform:scaleX(0.970);-webkit-text-stroke:.16px currentColor;">1234D56</div>
<div class="t" style="left:328.90px;top:301.72px;font-size:7.90px;color:#1a1a1a;transform:scaleX(0.888);-webkit-text-stroke:.16px currentColor;">3</div>
<div class="t" style="left:368.60px;top:301.72px;font-size:7.90px;color:#1a1a1a;transform:scaleX(0.980);-webkit-text-stroke:.16px currentColor;">No</div>
<div class="abs" style="left:386.20px;top:299.50px;width:10.40px;height:12.30px;background:#dcdcdc;border:.6px solid #b0b0b0"></div>
<svg style="left:389.20px;top:304.40px" width="4.4" height="2.2" viewBox="0 0 4.4 2.2" ><path d="M.3.3l1.900 1.700 1.900-1.700" fill="none" stroke="#555" stroke-width=".8"/></svg>
<div class="abs" style="left:147.60px;top:315.40px;width:11.20px;height:16.20px;background:#fff;border:.6px solid #c4c4c4"></div>
<div class="abs" style="left:158.80px;top:315.40px;width:238.20px;height:13.50px;background:#fff;border:.6px solid #b8b8b8"></div>
<div class="abs" style="left:193.10px;top:315.40px;width:0.70px;height:13.50px;background:#a8a8a8;"></div>
<div class="abs" style="left:248.10px;top:315.40px;width:0.70px;height:13.50px;background:#a8a8a8;"></div>
<div class="abs" style="left:317.60px;top:315.40px;width:0.70px;height:13.50px;background:#a8a8a8;"></div>
<div class="abs" style="left:344.70px;top:315.40px;width:0.70px;height:13.50px;background:#a8a8a8;"></div>
<div class="abs" style="left:367.20px;top:315.40px;width:0.70px;height:13.50px;background:#a8a8a8;"></div>
<div class="t" style="left:159.70px;top:318.22px;font-size:7.90px;color:#1a1a1a;transform:scaleX(0.945);-webkit-text-stroke:.16px currentColor;">MA4AB</div>
<div class="t" style="left:194.00px;top:318.22px;font-size:7.90px;color:#1a1a1a;transform:scaleX(0.980);-webkit-text-stroke:.16px currentColor;">MTL300</div>
<div class="t" style="left:249.50px;top:318.22px;font-size:7.90px;color:#1a1a1a;transform:scaleX(0.970);-webkit-text-stroke:.16px currentColor;">1234D12</div>
<div class="t" style="left:328.90px;top:318.22px;font-size:7.90px;color:#1a1a1a;transform:scaleX(0.888);-webkit-text-stroke:.16px currentColor;">4</div>
<div class="t" style="left:368.60px;top:318.22px;font-size:7.90px;color:#1a1a1a;transform:scaleX(0.980);-webkit-text-stroke:.16px currentColor;">No</div>
<div class="abs" style="left:386.20px;top:316.00px;width:10.40px;height:12.30px;background:#dcdcdc;border:.6px solid #b0b0b0"></div>
<svg style="left:389.20px;top:320.90px" width="4.4" height="2.2" viewBox="0 0 4.4 2.2" ><path d="M.3.3l1.900 1.700 1.900-1.700" fill="none" stroke="#555" stroke-width=".8"/></svg>
<svg style="left:152.00px;top:285.80px" width="3" height="5" viewBox="0 0 3 5" ><path d="M0 0l3 2.500-3 2.500z" fill="#222"/></svg>
<div class="abs" style="left:147.60px;top:380.00px;width:253.90px;height:10.60px;background:#f0f0f0;"></div>
<div class="t" style="left:150.70px;top:382.68px;font-size:6.40px;color:#444;transform:scaleX(0.928);">Record:</div>
<svg style="left:176.50px;top:383.30px" width="2.6" height="4.4" viewBox="0 0 2.6 4.4" ><path d="M2.600 0l-2.600 2.200 2.600 2.200z" fill="#333"/><path d="M-.9 0v4.400" stroke="#333" stroke-width=".8"/></svg>
<svg style="left:186.80px;top:383.30px" width="2.6" height="4.4" viewBox="0 0 2.6 4.4" ><path d="M2.600 0l-2.600 2.200 2.600 2.200z" fill="#b0b0b0"/></svg>
<div class="abs" style="left:192.70px;top:380.80px;width:30.20px;height:9.00px;background:#fff;border:.5px solid #dcdcdc"></div>
<div class="t" style="left:194.90px;top:382.68px;font-size:6.40px;color:#222;transform:scaleX(0.931);">1 of 3</div>
<svg style="left:228.30px;top:383.30px" width="2.6" height="4.4" viewBox="0 0 2.6 4.4" ><path d="M0 0l2.600 2.200-2.600 2.200z" fill="#333"/></svg>
<svg style="left:239.20px;top:383.30px" width="2.6" height="4.4" viewBox="0 0 2.6 4.4" ><path d="M0 0l2.600 2.200-2.600 2.200z" fill="#333"/><path d="M3.500 0v4.400" stroke="#333" stroke-width=".8"/></svg>
<svg style="left:250.00px;top:383.30px" width="2.6" height="4.4" viewBox="0 0 2.6 4.4" ><path d="M0 0l2.600 2.200-2.600 2.200z" fill="#9a9a9a"/></svg>
<svg style="left:253.30px;top:384.30px" width="3" height="3" viewBox="0 0 3 3" ><path d="M1.500 0l.5 1h1l-.8.700.3 1.100-1-.6-1 .6.300-1.100-.8-.700h1z" fill="#c8c8c8"/></svg>
<div class="abs" style="left:259.90px;top:381.00px;width:0.60px;height:8.60px;background:#d0d0d0;"></div>
<svg style="left:263.80px;top:381.50px" width="9.5" height="8.2" viewBox="0 0 9.5 8.2" ><path d="M.4.400h8l-3.200 3.400v3.800h-1.600v-3.800z" fill="none" stroke="#b4b4b4" stroke-width=".8"/><path d="M5.800 6l2 2M7.800 6l-2 2" stroke="#c0c0c0" stroke-width=".6"/></svg>
<div class="t" style="left:274.80px;top:382.68px;font-size:6.40px;color:#a6a6a6;transform:scaleX(0.988);">No Filter</div>
<div class="abs" style="left:306.80px;top:380.80px;width:43.70px;height:9.00px;background:#fff;border:.5px solid #dcdcdc"></div>
<div class="t" style="left:308.80px;top:382.68px;font-size:6.40px;color:#222;transform:scaleX(0.937);">Search</div>
<div class="abs" style="left:147.60px;top:390.30px;width:253.90px;height:0.60px;background:#b9c3cc;"></div>
<div class="abs" style="left:128.20px;top:430.30px;width:788.80px;height:11.80px;background:#f0f0f0;"></div>
<div class="t" style="left:131.80px;top:433.58px;font-size:6.40px;color:#444;transform:scaleX(0.928);">Record:</div>
<svg style="left:158.40px;top:434.20px" width="2.6" height="4.4" viewBox="0 0 2.6 4.4" ><path d="M2.600 0l-2.600 2.200 2.600 2.200z" fill="#333"/><path d="M-.9 0v4.400" stroke="#333" stroke-width=".8"/></svg>
<svg style="left:167.90px;top:434.20px" width="2.6" height="4.4" viewBox="0 0 2.6 4.4" ><path d="M2.600 0l-2.600 2.200 2.600 2.200z" fill="#b0b0b0"/></svg>
<div class="abs" style="left:174.60px;top:431.10px;width:30.20px;height:10.20px;background:#fff;border:.5px solid #dcdcdc"></div>
<div class="t" style="left:176.80px;top:433.58px;font-size:6.40px;color:#222;transform:scaleX(0.931);">1 of 2</div>
<svg style="left:209.40px;top:434.20px" width="2.6" height="4.4" viewBox="0 0 2.6 4.4" ><path d="M0 0l2.600 2.200-2.600 2.200z" fill="#333"/></svg>
<svg style="left:219.80px;top:434.20px" width="2.6" height="4.4" viewBox="0 0 2.6 4.4" ><path d="M0 0l2.600 2.200-2.600 2.200z" fill="#333"/><path d="M3.500 0v4.400" stroke="#333" stroke-width=".8"/></svg>
<svg style="left:228.30px;top:434.20px" width="2.6" height="4.4" viewBox="0 0 2.6 4.4" ><path d="M0 0l2.600 2.200-2.600 2.200z" fill="#333"/></svg>
<svg style="left:231.60px;top:435.20px" width="3" height="3" viewBox="0 0 3 3" ><path d="M1.500 0l.5 1h1l-.8.700.3 1.100-1-.6-1 .6.300-1.100-.8-.700h1z" fill="#e8a200"/></svg>
<div class="abs" style="left:241.90px;top:431.30px;width:0.60px;height:9.80px;background:#d0d0d0;"></div>
<svg style="left:245.80px;top:432.40px" width="9.5" height="8.2" viewBox="0 0 9.5 8.2" ><path d="M.4.400h8l-3.200 3.400v3.800h-1.600v-3.800z" fill="none" stroke="#b4b4b4" stroke-width=".8"/><path d="M5.800 6l2 2M7.800 6l-2 2" stroke="#c0c0c0" stroke-width=".6"/></svg>
<div class="t" style="left:256.80px;top:433.58px;font-size:6.40px;color:#a6a6a6;transform:scaleX(0.988);">No Filter</div>
<div class="abs" style="left:289.60px;top:431.10px;width:42.90px;height:10.20px;background:#fff;border:.5px solid #dcdcdc"></div>
<div class="t" style="left:291.60px;top:433.58px;font-size:6.40px;color:#222;transform:scaleX(0.937);">Search</div>
<div class="abs" style="left:0.00px;top:486.00px;width:931.00px;height:12.50px;background:#f3f2f1;"></div>
<div class="t" style="left:4.60px;top:489.90px;font-size:6.60px;color:#555;transform:scaleX(0.961);">Form View</div>
<div class="t" style="left:793.90px;top:489.90px;font-size:6.60px;color:#555;transform:scaleX(0.946);">Num Lock</div>
<div class="abs" style="left:834.00px;top:486.00px;width:23.00px;height:12.50px;background:#d2d0ce;"></div>
<svg style="left:840.60px;top:488.00px" width="10" height="8.8" viewBox="0 0 10 8.8" fill="none" stroke="#4a4846" stroke-width=".8"><rect x=".4" y=".4" width="9.200" height="8" rx=".6"/><path d="M.4 2.200h9.200" stroke-width="1.100"/><path d="M2 4.300h1.600M2 6.500h1.600" stroke-width=".8"/><path d="M5 4.300h3.200M5 6.500h3.200" stroke-width="1.100"/></svg>
<svg style="left:865.00px;top:487.80px" width="9.4" height="9" viewBox="0 0 9.4 9" fill="none" stroke="#4a4846" stroke-width=".8"><rect x=".4" y=".4" width="8.600" height="8.200" rx=".6"/><path d="M.4 2.600h8.600M4.700 2.600v6M.4 4.600h8.600M.4 6.600h8.600" stroke-width=".6"/><path d="M3 1.500h3.400" stroke-width=".7"/></svg>
<svg style="left:889.40px;top:487.80px" width="9.6" height="9.4" viewBox="0 0 9.6 9.4" fill="#b4b2b0" stroke="#4a4846" stroke-width=".8"><rect x=".4" y=".4" width="8.800" height="8.600" rx=".6"/><path d="M.4 3.200h8.800M4.800 .4v8.600M.4 5.600h8.800" stroke-width=".7"/><path d="M1.500 2.300h2.400M6 2.300h2.400M6 7.300h2.400" stroke-width=".8" stroke="#fff"/></svg>
<svg style="left:913.40px;top:487.80px" width="9.8" height="9.4" viewBox="0 0 9.8 9.4" fill="none" stroke="#4a4846" stroke-width=".8"><path d="M.5 8.900v-8.400l8.400 8.400z" stroke-width="1"/><path d="M9.300.5v8.400h-8.800" stroke-width=".7"/><path d="M7 .5v5.500" stroke-width=".6"/><path d="M2.300 7v-2.800l2.800 2.800z" stroke-width=".5"/></svg>
<div class="abs" style="left:0.00px;top:498.50px;width:931.00px;height:24.50px;background:#1b2a3b;"></div>
<svg style="left:9.00px;top:506.00px" width="11.2" height="10.4" viewBox="0 0 11.2 10.4" ><path d="M0 1.500l4.600-.7v4.100h-4.600zM5.300.7l5.900-.9v5.100h-5.900zM0 5.600h4.600v4.100l-4.600-.7zM5.300 5.600h5.900v5.100l-5.900-.9z" fill="#fff"/></svg>
<div class="abs" style="left:30.20px;top:499.00px;width:207.60px;height:24.00px;background:#f2f2f2;"></div>
<svg style="left:36.20px;top:505.60px" width="10.2" height="10" viewBox="0 0 10.2 10" fill="none" stroke="#2a2a2a" stroke-width="1"><circle cx="6.200" cy="3.900" r="3.300"/><path d="M3.800 6.300l-3.400 3.400"/></svg>
<div class="t" style="left:53.40px;top:506.55px;font-size:9.20px;color:#3a3a3a;transform:scaleX(0.976);">Type here to search</div>
<svg style="left:192.00px;top:499.00px" width="46" height="24" viewBox="0 0 46 24" ><path d="M7 13.500c.5-4 4-7.500 9-8.500s8.500 1 8 4.500-3.500 7.500-8.500 8.500-9-1-8.500-4.500z" fill="#6a4aa6"/><path d="M10 12.500c1-2.500 3.500-4.500 6.500-5s4 .8 3.500 2.500-2.500 4-5.500 4.800-5-.3-4.500-2.300z" fill="#8463c0"/><circle cx="37.900" cy="10.700" r="3.500" fill="#f2a93b"/><circle cx="37" cy="9.800" r="1.600" fill="#f7c872"/><path d="M26.600 11.600l.8 1.600 1.700.2-1.300 1.200.4 1.700-1.600-.9-1.600.9.400-1.700-1.300-1.200 1.700-.2z" fill="#d86fb8"/><circle cx="32.600" cy="4.900" r="1" fill="#3ec27a"/><circle cx="1.600" cy="12.400" r="1" fill="#f2a93b"/><path d="M12 24c3-6.500 13-8.500 21-6s12 6 12 6z" fill="#35c6b0"/><path d="M17 24c3-4.500 10-5.500 16-3.500s9 3.500 9 3.500z" fill="#2b88d8"/><path d="M23 24c2-2.500 7-3 11-1.500s5 1.500 5 1.500z" fill="#4cd964"/></svg>
<svg style="left:247.70px;top:506.20px" width="9.2" height="9.2" viewBox="0 0 9.2 9.2" ><circle cx="4.600" cy="4.600" r="3.800" fill="none" stroke="#fff" stroke-width="1.300"/></svg>
<svg style="left:275.50px;top:504.30px" width="14" height="11.7" viewBox="0 0 12 10" ><path d="M0 1.500h4.500l1 1.200h6.500v7h-12z" fill="#f7c948"/><path d="M0 4h12v5.700h-12z" fill="#fddc73"/><path d="M3 6.200h6v3.500h-6z" fill="#3b8ed0"/></svg>
<div class="abs" style="left:271.00px;top:521.60px;width:23.00px;height:1.40px;background:#8ab4e8;"></div>
<svg style="left:306.30px;top:503.80px" width="13.8" height="13.8" viewBox="0 0 11.5 11.5" ><circle cx="5.700" cy="5.900" r="5.400" fill="#ff9a1f"/><circle cx="5.900" cy="6.400" r="3.300" fill="#7a3fd8"/><path d="M.5 6c0-3 2-5.500 5-5.700-1.500 1-2 2-1.500 3 1-1 3-.8 3.800.7-1.500-.5-2.500.3-2.300 1.600.2 1.300 1.500 1.800 2.600 1.300-.5 1.800-2.200 2.800-4 2.500s-3.600-1.500-3.600-3.400z" fill="#ff5a26"/></svg>
<svg style="left:337.30px;top:504.00px" width="12.3" height="13.4" viewBox="0 0 11 12" ><path d="M5.500 0l2 .8h1.700l1.500 2-.5 1.500.3 1.200-1.200 3.800-3.800 2.700-3.800-2.700-1.200-3.800.300-1.200-.5-1.500 1.500-2h1.700z" fill="#fb542b"/><path d="M5.500 2.800l2.300.2 1 1.500-1.500 2 .5 1.500-2.300 1.500-2.300-1.500.5-1.500-1.500-2 1-1.500z" fill="#fff"/><path d="M5.500 5l1 1.500-1 1.200-1-1.200z" fill="#fb542b"/></svg>
<svg style="left:366.30px;top:503.80px" width="14" height="13" viewBox="0 0 14 13" ><rect x="5" y="0" width="8.500" height="8" fill="#2f9be8"/><rect x="0" y="4.500" width="8.500" height="8.500" fill="#0f5fa8"/></svg>
<svg style="left:396.30px;top:503.60px" width="14" height="14" viewBox="0 0 14 14" ><circle cx="7" cy="7" r="7" fill="#fff"/><g transform="translate(3.600 2.200) scale(.78)"><path d="M4.500 0a4.300 4.300 0 0 1 4.300 4.300c0 3-4.300 7.500-4.300 7.500s-4.300-4.500-4.300-7.500a4.300 4.300 0 0 1 4.300-4.300z" fill="#34a853"/><path d="M4.500 0a4.300 4.300 0 0 1 3 1.200l-3 3.100z" fill="#ea4335"/><path d="M7.500 1.200a4.300 4.300 0 0 1 1.300 3.100h-4.300z" fill="#4285f4"/><path d="M.2 4.300a4.300 4.300 0 0 1 1.300-3.100l3 3.100z" fill="#fbbc04"/><circle cx="4.500" cy="4.300" r="1.600" fill="#fff"/></g></svg>
<svg style="left:427.30px;top:503.60px" width="10.8" height="13.6" viewBox="0 0 9.5 12" ><rect x="0" y="0" width="9.500" height="12" rx=".8" fill="#5f7686"/><rect x="1.200" y="1.200" width="7.100" height="2.800" fill="#cfe3ee"/><path d="M1.200 5.500h1.800v1.400h-1.800zM3.900 5.500h1.800v1.400h-1.800zM6.600 5.500h1.800v1.400h-1.800zM1.200 7.700h1.800v1.400h-1.800zM3.900 7.700h1.800v1.400h-1.800zM6.600 7.700h1.800v1.400h-1.800zM1.200 9.800h1.800v1.400h-1.800zM3.900 9.800h1.800v1.400h-1.800zM6.600 9.800h1.800v1.400h-1.800z" fill="#dfe9ef"/></svg>
<svg style="left:456.00px;top:503.90px" width="13.8" height="13.8" viewBox="0 0 12 12" ><circle cx="6" cy="6" r="5.800" fill="#fff"/><path d="M6 .2a5.800 5.800 0 0 1 5 2.900h-5a2.900 2.900 0 0 0-2.700 1.800l-2.300-2.700a5.800 5.800 0 0 1 5-2z" fill="#ea4335"/><path d="M11 3.100a5.800 5.800 0 0 1-4.800 8.700l2.400-4.200a2.900 2.900 0 0 0 .1-3.100l-.3-1.400z" fill="#fbbc04"/><path d="M6.200 11.800a5.800 5.800 0 0 1-5.200-9.600l2.400 4.200a2.900 2.900 0 0 0 3.500 1.400z" fill="#34a853"/><circle cx="6" cy="6" r="2.300" fill="#4285f4" stroke="#fff" stroke-width=".7"/></svg>
<div class="abs" style="left:479.00px;top:498.50px;width:29.70px;height:24.50px;background:#3b4a5a;"></div>
<div class="abs" style="left:479.00px;top:521.60px;width:29.70px;height:1.40px;background:#8ab4e8;"></div>
<svg style="left:486.00px;top:503.70px" width="14.4" height="13.8" viewBox="0 0 12.5 12" ><ellipse cx="8" cy="2.500" rx="4.500" ry="2" fill="#d9606a"/><path d="M3.500 2.500v7c0 1.100 2 2 4.500 2s4.500-.9 4.500-2v-7c0 1.100-2 2-4.500 2s-4.500-.9-4.500-2z" fill="#b5353f"/><rect x="0" y="3" width="7" height="7" rx=".8" fill="#a4262c"/><text x="1.500" y="8.800" font-size="6" font-weight="bold" fill="#fff" font-family="Liberation Sans, sans-serif">A</text></svg>
<div class="abs" style="left:509.50px;top:521.60px;width:29.00px;height:1.40px;background:#8ab4e8;"></div>
<svg style="left:516.00px;top:503.70px" width="14.4" height="13.8" viewBox="0 0 12.5 12" ><rect x="3" y=".5" width="9.500" height="11" rx=".8" fill="#2b7cd3"/><path d="M3 3.300h9.500v2.800h-9.500z" fill="#41a5ee"/><path d="M3 8.800h9.500v2.200a.8.800 0 0 1-.8.800h-8.700z" fill="#185abd"/><rect x="0" y="3" width="7" height="7" rx=".8" fill="#185abd"/><text x="1" y="8.800" font-size="6" font-weight="bold" fill="#fff" font-family="Liberation Sans, sans-serif">W</text></svg>
<svg style="left:740.50px;top:506.00px" width="9" height="10" viewBox="0 0 9 10" ><path d="M4.500 0l4 1.300v3.200c0 2.500-1.700 4.300-4 5.300-2.300-1-4-2.800-4-5.300v-3.200z" fill="#fff"/><path d="M4.500.8v8.200M.8 4.500h7.400" stroke="#1b2a3b" stroke-width=".7"/><circle cx="7" cy="8" r="2.200" fill="#21a366"/></svg>
<svg style="left:755.00px;top:506.50px" width="9.5" height="8.5" viewBox="0 0 9.5 8.5" ><rect x="0" y="0" width="9.500" height="6.500" fill="#8a949e"/><rect x="1" y="1" width="7.500" height="4.500" fill="#5a646e"/><path d="M2 8h5.500" stroke="#8a949e" stroke-width="1.200"/></svg>
<svg style="left:770.80px;top:505.50px" width="7" height="10" viewBox="0 0 7 10" ><rect x="0" y="0" width="7" height="10" rx="3.300" fill="#1e7fe0"/><path d="M2 3.200l3 3-1.500 1.500v-5.400l1.500 1.500-3 3" fill="none" stroke="#fff" stroke-width=".7"/></svg>
<svg style="left:784.00px;top:506.00px" width="9.5" height="9.5" viewBox="0 0 9.5 9.5" ><rect width="9.500" height="9.500" rx="1" fill="#4aa8e8"/><path d="M2 5.500l2-2.500 2 1.500 1.500-2" fill="none" stroke="#e8f3fb" stroke-width=".8"/></svg>
<svg style="left:798.50px;top:506.00px" width="9.5" height="9.5" viewBox="0 0 9.5 9.5" ><rect x="0" y="1" width="4.500" height="8.500" fill="#d83b30"/><rect x="4.500" y="0" width="5" height="5" fill="#f2b33d"/><rect x="4.500" y="5" width="5" height="4.500" fill="#3a9e4c"/><rect x="1" y="5.500" width="3" height="3" fill="#2e7fd8"/></svg>
<svg style="left:813.00px;top:507.50px" width="10" height="6" viewBox="0 0 10 6" ><rect x="1.500" y=".5" width="8" height="5" fill="none" stroke="#fff" stroke-width=".8"/><rect x="2.500" y="1.500" width="3.500" height="3" fill="#fff"/><path d="M.5 2v2" stroke="#fff" stroke-width="1"/></svg>
<svg style="left:828.00px;top:506.00px" width="9.5" height="9" viewBox="0 0 9.5 9" fill="none" stroke-width=".9"><path d="M1 8.500a7.500 7.500 0 0 1 7.500-7.500" stroke="#9aa3ad"/><path d="M3.500 8.500a5 5 0 0 1 5-5" stroke="#9aa3ad"/><path d="M6 8.500a2.500 2.500 0 0 1 2.500-2.500" stroke="#fff"/><circle cx="8.300" cy="8.300" r=".8" fill="#fff" stroke="none"/></svg>
<svg style="left:842.00px;top:506.50px" width="10" height="8" viewBox="0 0 10 8" ><path d="M0 2.800h1.800l2.500-2.300v7l-2.500-2.300h-1.800z" fill="none" stroke="#fff" stroke-width=".7"/><path d="M5.800 2.500a2 2 0 0 1 0 3M7.200 1.200a4 4 0 0 1 0 5.600" fill="none" stroke="#cfd5da" stroke-width=".7"/></svg>
<div class="t" style="left:868.00px;top:501.61px;font-size:7.70px;color:#fff;transform:scaleX(0.861);">22:25</div>
<div class="t" style="left:858.00px;top:512.81px;font-size:7.70px;color:#fff;transform:scaleX(0.970);">30/06/2022</div>
<svg style="left:906.00px;top:506.50px" width="10" height="9" viewBox="0 0 10 9" ><path d="M.5.500h9v6.500h-2.500v1.800l-2.200-1.800h-4.300z" fill="none" stroke="#fff" stroke-width=".8"/></svg>
<div class="abs" style="left:928.00px;top:498.50px;width:0.60px;height:24.50px;background:#5a6673;"></div>
</body>
</html>
